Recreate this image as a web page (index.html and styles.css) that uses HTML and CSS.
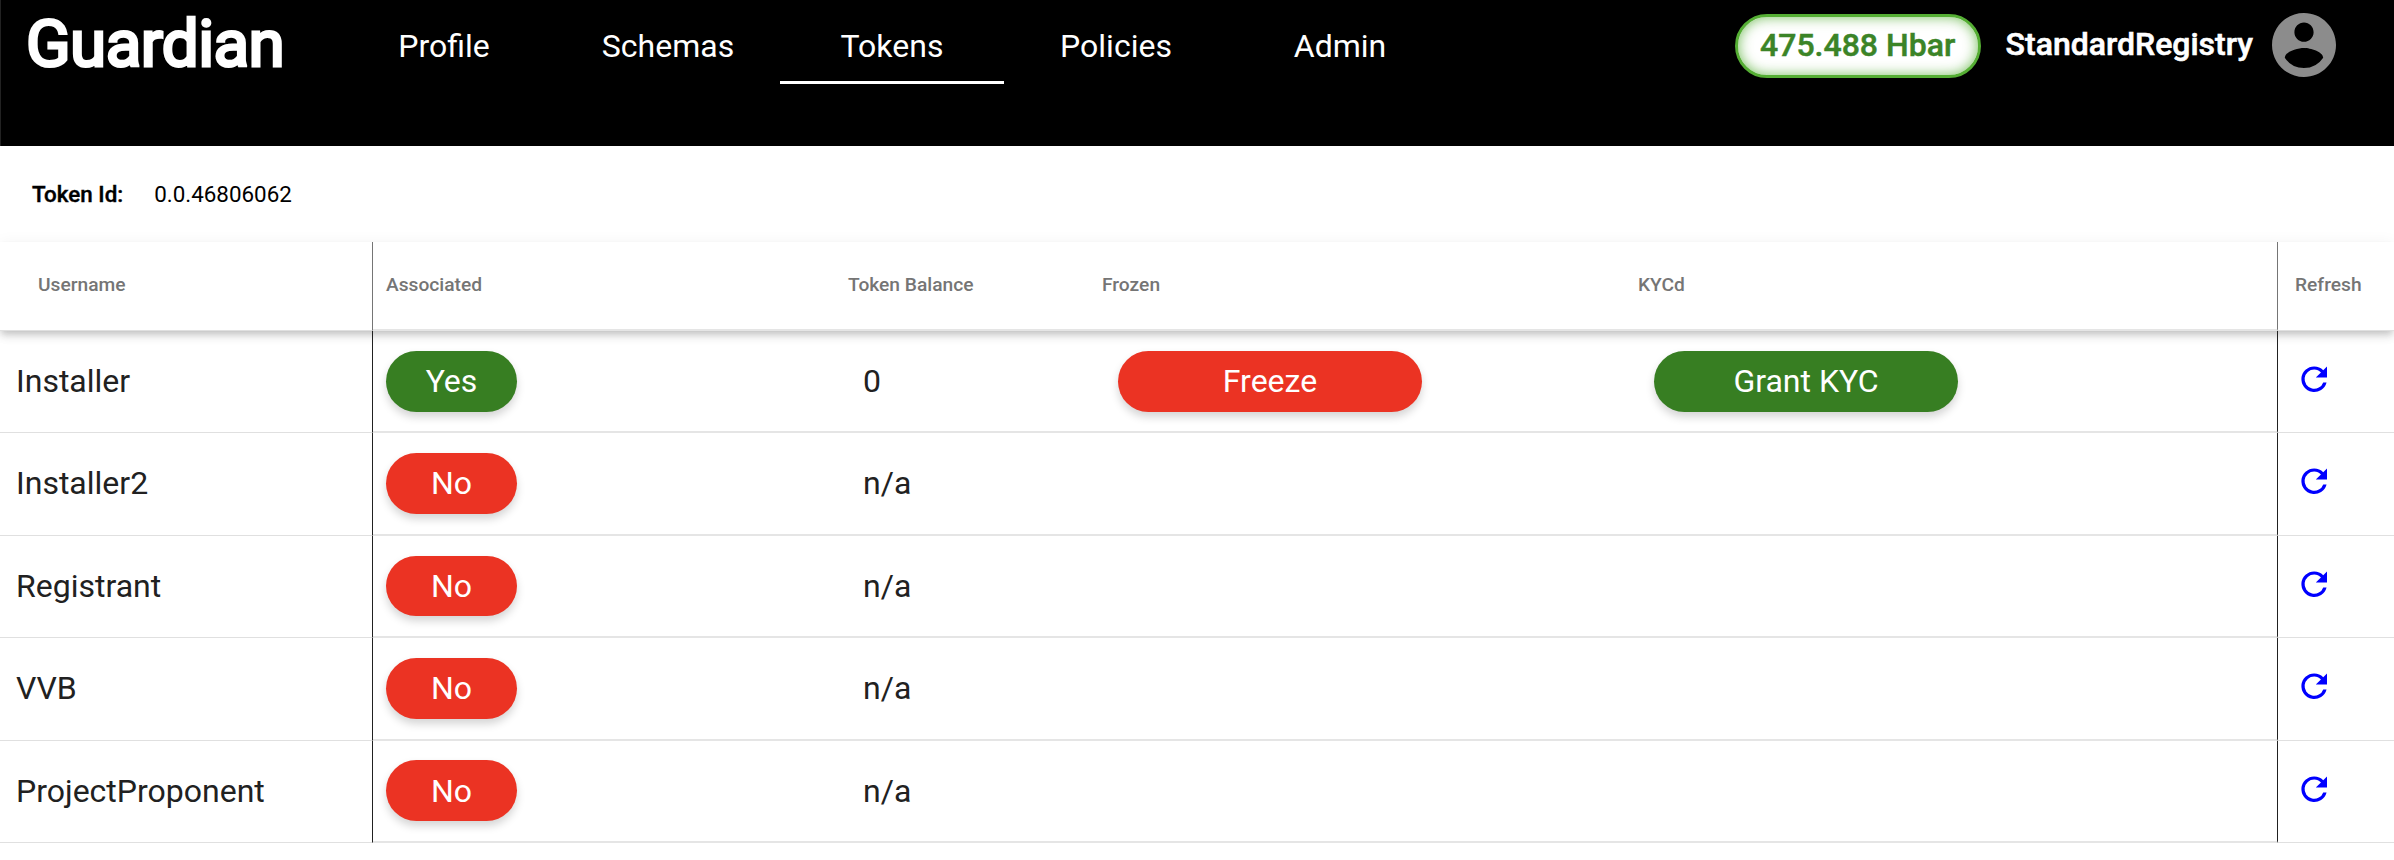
FILE: index.html
```html
<!DOCTYPE html>
<html lang="en">
<head>
<meta charset="utf-8">
<title>Guardian</title>
<link rel="stylesheet" href="styles.css">
</head>
<body>
<svg class="sprite" width="0" height="0">
  <symbol id="refresh" viewBox="0 0 24 24"><path d="M17.65 6.35A7.96 7.96 0 0 0 12 4a8 8 0 1 0 7.73 10h-2.08A6 6 0 1 1 12 6c1.66 0 3.14.69 4.22 1.78L13 11h7V4l-2.35 2.35z"/></symbol>
</svg>
<header class="topbar">
  <div class="brand">Guardian</div>
  <nav class="nav">
    <a class="tab profile">Profile</a>
    <a class="tab schemas">Schemas</a>
    <a class="tab tokens active">Tokens</a>
    <a class="tab policies">Policies</a>
    <a class="tab admin">Admin</a>
  </nav>
  <div class="account">
    <span class="balance">475.488 Hbar</span>
    <span class="user">StandardRegistry</span>
    <svg class="avatar" viewBox="2 2 20 20"><path d="M12 2C6.48 2 2 6.48 2 12s4.48 10 10 10 10-4.48 10-10S17.52 2 12 2zm0 3c1.66 0 3 1.34 3 3s-1.34 3-3 3-3-1.34-3-3 1.34-3 3-3zm0 14.2a7.2 7.2 0 0 1-6-3.22c.03-1.99 4-3.08 6-3.08 1.99 0 5.97 1.09 6 3.08a7.2 7.2 0 0 1-6 3.22z"/></svg>
  </div>
</header>
<section class="token"><b class="token-label">Token Id:</b><span class="token-value">0.0.46806062</span></section>
<main class="table">
  <div class="row head">
    <div class="cell name">Username</div><div class="cell assoc">Associated</div><div class="cell">Token Balance</div><div class="cell">Frozen</div><div class="cell kyc">KYCd</div><div class="cell action">Refresh</div>
  </div>
  <div class="row">
    <div class="cell name">Installer</div><div class="cell assoc"><span class="pill yes">Yes</span></div><div class="cell amount">0</div><div class="cell val"><span class="pill wide no">Freeze</span></div><div class="cell val kyc"><span class="pill wide yes">Grant KYC</span></div><div class="cell action"><svg class="refresh"><use href="#refresh"/></svg></div>
  </div>
  <div class="row">
    <div class="cell name">Installer2</div><div class="cell assoc"><span class="pill no">No</span></div><div class="cell amount">n/a</div><div class="cell"></div><div class="cell kyc"></div><div class="cell action"><svg class="refresh"><use href="#refresh"/></svg></div>
  </div>
  <div class="row">
    <div class="cell name">Registrant</div><div class="cell assoc"><span class="pill no">No</span></div><div class="cell amount">n/a</div><div class="cell"></div><div class="cell kyc"></div><div class="cell action"><svg class="refresh"><use href="#refresh"/></svg></div>
  </div>
  <div class="row">
    <div class="cell name">VVB</div><div class="cell assoc"><span class="pill no">No</span></div><div class="cell amount">n/a</div><div class="cell"></div><div class="cell kyc"></div><div class="cell action"><svg class="refresh"><use href="#refresh"/></svg></div>
  </div>
  <div class="row">
    <div class="cell name">ProjectProponent</div><div class="cell assoc"><span class="pill no">No</span></div><div class="cell amount">n/a</div><div class="cell"></div><div class="cell kyc"></div><div class="cell action"><svg class="refresh"><use href="#refresh"/></svg></div>
  </div>
</main>
</body>
</html>
```
FILE: styles.css
```css
* { box-sizing: border-box; }
body { margin: 0; height: 860px; overflow: hidden; background: #fff; color: #212121; font: 32px/1.2 Roboto, sans-serif; }
.sprite { display: block; }
.topbar { display: flex; align-items: flex-start; height: 146px; border-left: 1px solid #222; background: #000; color: #fff; }
.brand { width: 331px; padding: 4px 0 0 25px; font-size: 65.6px; line-height: 80px; font-weight: 400; letter-spacing: -0.6px; -webkit-text-stroke: 3px #fff; }
.nav { display: flex; }
.tab { display: flex; justify-content: center; width: 224px; height: 84px; padding-top: 27px; border-bottom: 3px solid transparent; }
.active { border-bottom-color: #fff; }
.account { display: flex; align-items: center; margin: 13px 58px 0 auto; height: 64px; font-weight: 500; }
.balance { display: flex; align-items: center; justify-content: center; width: 246px; height: 64px; margin: 2px 25px 0 0; padding-bottom: 2px; border: 3px solid #55ae34; border-radius: 32px; background: #fff; color: #3b8427; box-shadow: inset 0 0 13px rgba(85,174,52,.8); -webkit-text-stroke: .5px #3b8427; }
.user { margin-right: 19px; padding-bottom: 2px; -webkit-text-stroke: .6px #fff; }
.avatar { width: 64px; height: 64px; fill: #8c8c8c; }
.token { display: flex; align-items: center; gap: 31px; height: 96px; padding: 0 32px; color: #000; font-size: 22.4px; }
.token-label { font-weight: 500; -webkit-text-stroke: .4px #000; }
.row { display: grid; grid-template-columns: 373px 475px 254px 536px 640px 116px; height: 102.4px; }
.cell { display: flex; align-items: center; border-bottom: 2px solid #e5e5e5; }
.name { padding: 0 0 1px 16px; border-right: 1px solid #212121; border-bottom: 1px solid #e0e0e0; }
.assoc { padding-left: 13px; }
.kyc { border-right: 1px solid #212121; }
.amount { padding-left: 15px; }
.val { padding-left: 16px; }
.action { padding: 0 0 1px 17px; border-bottom: 1px solid #e0e0e0; }
.head { height: 89px; color: #757575; font-size: 19.2px; font-weight: 500; box-shadow: 0 3.2px 6.4px -1.6px rgba(0,0,0,.14), 0 6.4px 8px rgba(0,0,0,.09), 0 1.6px 16px rgba(0,0,0,.06); }
.head .cell { padding-bottom: 1px; }
.head .name { padding-left: 38px; padding-bottom: 2px; border-right-color: #757575; }
.head .action { padding-bottom: 2px; }
.head .kyc { border-right-color: #757575; }
.pill { display: flex; align-items: center; justify-content: center; width: 131px; height: 60.8px; border-radius: 30.4px; color: #fff; box-shadow: 0 5px 8px rgba(0,0,0,.17); }
.wide { width: 304px; }
.yes { background: #377e22; }
.no { background: #eb3323; }
.refresh { width: 38.4px; height: 38.4px; margin-top: -4px; fill: #00f; }
```
